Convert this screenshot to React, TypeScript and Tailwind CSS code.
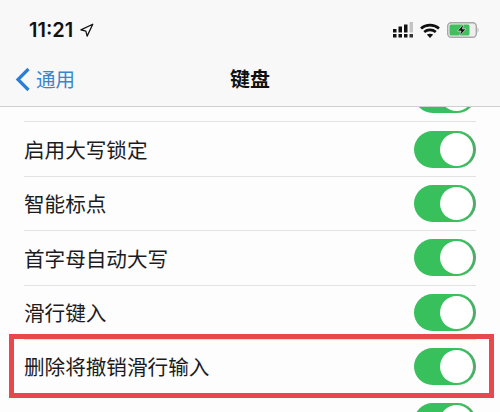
import { Navigation } from "lucide-react";

// first row sits under the header, only the bottom of its toggle shows
const rows = [
  { label: "" },
  { label: "启用大写锁定" },
  { label: "智能标点" },
  { label: "首字母自动大写" },
  { label: "滑行键入" },
  { label: "删除将撤销滑行输入", marked: true },
  { label: "“.”快捷键" },
];

const Toggle = () => (
  <div className="w-[62px] h-[37px] rounded-full bg-[#38c05c] border-r-[2px] border-[#5aa373] flex items-center justify-end pr-[1px] shrink-0">
    <div className="w-[33px] h-[33px] rounded-full bg-white" />
  </div>
);

const SignalBars = () => (
  <svg width="21" height="16" viewBox="0 0 21 16" className="mr-[6px]">
    <rect x="0" y="7" width="3.5" height="3.5" fill="#111" />
    <rect x="0" y="12" width="3.5" height="3.5" fill="#111" />
    <rect x="5.5" y="4.5" width="3.5" height="6" fill="#111" />
    <rect x="5.5" y="12" width="3.5" height="3.5" fill="#111" />
    <rect x="11" y="2.5" width="3.5" height="8" fill="#111" />
    <rect x="11" y="12" width="3.5" height="3.5" fill="#111" />
    <rect x="16.5" y="0" width="3.5" height="10.5" fill="#c4c4c4" />
    <rect x="16.5" y="12" width="3.5" height="3.5" fill="#333" />
  </svg>
);

const Wifi = () => (
  <svg width="20" height="15" viewBox="0 0 20 15" className="mr-[7px]">
    <path d="M1 5.5 C6 1 14 1 19 5.5" fill="none" stroke="#111" strokeWidth="2.6" />
    <path d="M4.2 9 C7.5 6.2 12.5 6.2 15.8 9" fill="none" stroke="#111" strokeWidth="2.6" />
    <path d="M10 15 L6.8 11.6 C8.8 10.4 11.2 10.4 13.2 11.6 Z" fill="#111" />
  </svg>
);

const Battery = () => (
  <svg width="32" height="16" viewBox="0 0 32 16">
    <rect x="0.7" y="0.7" width="28.6" height="14.6" rx="3.5" fill="#eeeeee" stroke="#a8a8a8" strokeWidth="1.4" />
    <rect x="2.5" y="2.5" width="20" height="11" rx="1.5" fill="#3fbf5e" />
    <path d="M30.6 5.5 C31.8 6 31.8 10 30.6 10.5 Z" fill="#a8a8a8" />
    <path d="M16.5 2 L10.5 9 H14 L12.5 14 L19 7 H15.5 Z" fill="#111" stroke="#eef8ef" strokeWidth="0.6" />
  </svg>
);

const Row = ({ label, marked }: { label: string; marked?: boolean }) => (
  <div className="relative h-[54.4px] pl-[24px] pr-[24px]">
    <div className="h-full flex items-center justify-between border-b border-[#e2e2e4]">
      <span className="text-[20.6px] text-[#1c1c1e] leading-none">{label}</span>
      <Toggle />
    </div>
    {marked && (
      <div className="absolute left-[9px] right-[6px] top-[-6px] bottom-[-4px] border-[5px] border-[#e8474b]" />
    )}
  </div>
);

export default function App() {
  return (
    <div className="w-[500px] h-[412px] overflow-hidden bg-[#fdfdfd] font-['Noto_Sans_CJK_SC','Noto_Sans',sans-serif]">
      <header className="relative z-10 h-[107px] bg-[#f8f8f9] border-b border-[#cfcfd1]">
        <div className="h-[60px] pl-[29px] pr-[21px] flex items-center justify-between">
          <div className="flex items-center gap-[6px]">
            <span className="font-['Inter',sans-serif] text-[20px] font-semibold text-[#111] leading-none">11:21</span>
            <Navigation size={15} strokeWidth={2} className="text-[#111]" />
          </div>
          <div className="flex items-center">
            <SignalBars />
            <Wifi />
            <Battery />
          </div>
        </div>
        <div className="relative flex items-center justify-center h-[38px]">
          <div className="absolute left-[15px] flex items-center gap-[5px] text-[#3a86cc]">
            <svg width="16" height="25" viewBox="0 0 16 25">
              <path d="M13.5 2 L3 12.5 L13.5 23" fill="none" stroke="#2a7fd4" strokeWidth="3.2" />
            </svg>
            <span className="text-[19.5px] leading-none">通用</span>
          </div>
          <span className="text-[20px] font-bold text-[#111] leading-none">键盘</span>
        </div>
      </header>
      <div className="-mt-[39px]">
        {rows.map((row) => (
          <Row key={row.label} {...row} />
        ))}
      </div>
    </div>
  );
}
